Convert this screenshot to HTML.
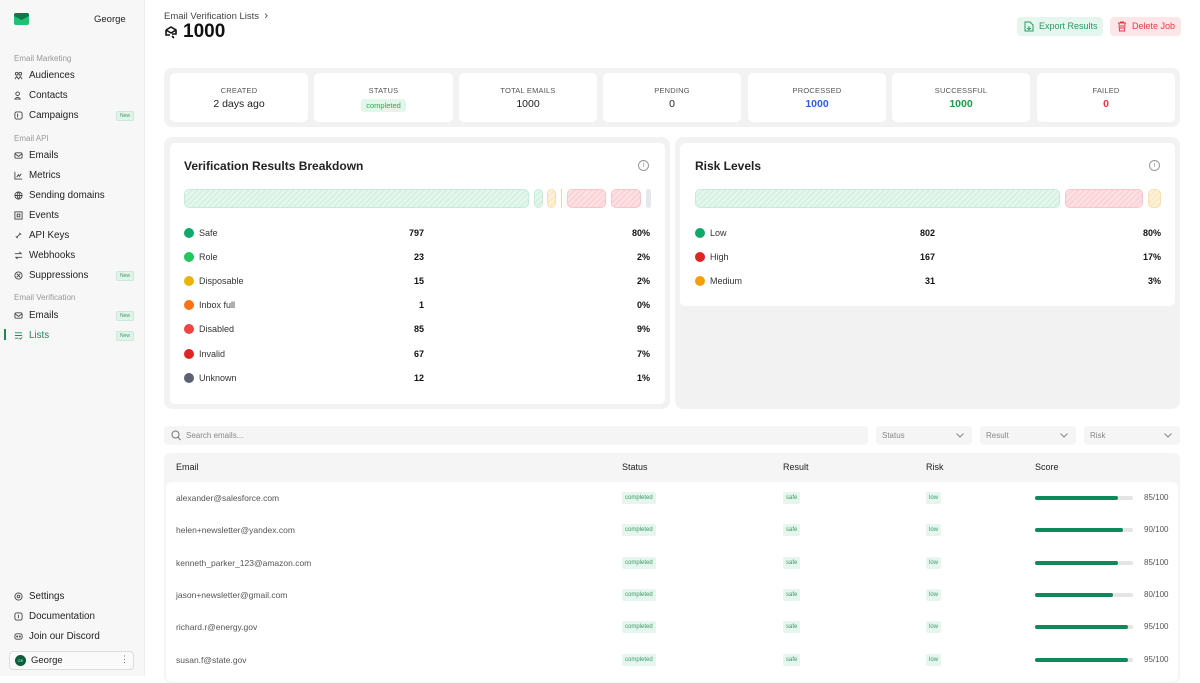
<!DOCTYPE html>
<html><head><meta charset="utf-8"><style>
*{box-sizing:border-box;margin:0;padding:0}
body{width:1200px;height:676px;overflow:hidden;font-family:"Liberation Sans",sans-serif;background:#fff;color:#111;position:relative}
.a{position:absolute}
#sb{left:0;top:0;width:145px;height:676px;background:#f7f7f7;border-right:1px solid #ececec}
.sec{position:absolute;left:14px;font-size:8px;color:#999}
.it{position:absolute;left:14px;font-size:9.8px;color:#222;display:flex;align-items:center;gap:6px;width:120px}
.it svg{width:9px;height:9px;flex:none}
.new{position:absolute;right:0;font-size:5px;color:#3a9a6a;background:#e2f4ea;border:1px solid #cbe9d8;border-radius:2px;padding:1px 3px}
.grey{background:#f2f2f2;border-radius:8px}
.card{position:absolute;background:#fff;border-radius:5px;text-align:center}
.lbl{font-size:7.5px;color:#555;margin-top:13px;letter-spacing:.2px}
.val{font-size:10.5px;margin-top:3px;color:#222}
.seg{position:absolute;height:19px;border-radius:5px}
.g{background:repeating-linear-gradient(135deg,#d6f1e4 0 2px,#e6f7ee 2px 4px);border:1px solid #c5ecd8}
.r{background:repeating-linear-gradient(135deg,#fbd3d6 0 2px,#fde3e5 2px 4px);border:1px solid #f7c5ca}
.y{background:repeating-linear-gradient(135deg,#fbe9c2 0 2px,#fdf3dc 2px 4px);border:1px solid #f7e0b0}
.lr{position:absolute;font-size:9px;color:#333;display:flex;align-items:center;gap:5px}
.dot{width:10px;height:10px;border-radius:50%}
.num{position:absolute;font-size:9px;font-weight:bold;text-align:right;width:60px}
.pct{position:absolute;font-size:9px;font-weight:bold;text-align:right;width:60px}
.tag{position:absolute;font-size:6px;color:#3a9a6a;background:#e6f6ee;border-radius:2px;padding:3px 3px;line-height:6px}
.row{position:absolute;left:176px;font-size:8.5px;color:#555}
.dd{position:absolute;top:426px;width:96px;height:19px;background:#f5f5f5;border-radius:4px;font-size:8px;color:#888;padding:5px 6px}
.dd svg{position:absolute;right:8px;top:7px}
</style></head><body>
<div id="sb" class="a">
<svg class="a" style="left:14px;top:13px" width="15" height="12" viewBox="0 0 15 12"><rect width="15" height="12" rx="2" fill="#1fbf74"/><path d="M0 2 Q0 0 2 0 H13 Q15 0 15 2 V3 L7.5 7 L0 3Z" fill="#0c7a48"/></svg>
<div class="a" style="left:94px;top:14px;font-size:9.5px;color:#222">George</div>
<div class="sec" style="top:54px">Email Marketing</div>
<div class="it" style="top:70px"><svg viewBox="0 0 10 10" fill="none" stroke="#444"><circle cx="3" cy="3" r="1.5"/><circle cx="7" cy="3" r="1.5"/><path d="M1 9 L3 6 L5 9 M5 9 L7 6 L9 9"/></svg>Audiences</div>
<div class="it" style="top:90px"><svg viewBox="0 0 10 10" fill="none" stroke="#444"><circle cx="4" cy="3" r="2"/><path d="M1 9 Q4 5 7 9Z"/></svg>Contacts</div>
<div class="it" style="top:110px"><svg viewBox="0 0 10 10" fill="none" stroke="#444"><rect x="1" y="1" width="8" height="8" rx="2"/><path d="M4 3V7"/></svg>Campaigns<span class="new">New</span></div>
<div class="sec" style="top:134px">Email API</div>
<div class="it" style="top:150px"><svg viewBox="0 0 10 10" fill="none" stroke="#444"><rect x="1" y="2" width="8" height="6" rx="1.5"/><path d="M1 3L5 6L9 3"/></svg>Emails</div>
<div class="it" style="top:170px"><svg viewBox="0 0 10 10" fill="none" stroke="#444"><path d="M1 1V9H9M3 7L5 4L6 6L8 3"/></svg>Metrics</div>
<div class="it" style="top:190px"><svg viewBox="0 0 10 10" fill="none" stroke="#444"><circle cx="5" cy="5" r="4"/><path d="M1 5H9M5 1Q2 5 5 9Q8 5 5 1"/></svg>Sending domains</div>
<div class="it" style="top:210px"><svg viewBox="0 0 10 10" fill="none" stroke="#444"><rect x="1" y="1" width="8" height="8"/><rect x="3.5" y="3.5" width="3" height="3"/></svg>Events</div>
<div class="it" style="top:230px"><svg viewBox="0 0 10 10" fill="none" stroke="#444"><path d="M2 6L4 8M6 2L8 4M3 7L7 3"/></svg>API Keys</div>
<div class="it" style="top:250px"><svg viewBox="0 0 10 10" fill="none" stroke="#444"><path d="M1 3H8L6 1M9 7H2L4 9"/></svg>Webhooks</div>
<div class="it" style="top:270px"><svg viewBox="0 0 10 10" fill="none" stroke="#444"><circle cx="5" cy="5" r="4"/><path d="M3 3L7 7M7 3L3 7"/></svg>Suppressions<span class="new">New</span></div>
<div class="sec" style="top:293px">Email Verification</div>
<div class="it" style="top:310px"><svg viewBox="0 0 10 10" fill="none" stroke="#444"><rect x="1" y="2" width="8" height="6" rx="1.5"/><path d="M1 3L5 6L9 3"/></svg>Emails<span class="new">New</span></div>
<div class="a" style="left:4px;top:329px;width:2px;height:11px;background:#1a8a55"></div>
<div class="it" style="top:330px;color:#1a8a55"><svg viewBox="0 0 10 10" fill="none" stroke="#1a8a55"><path d="M1 2H9M1 5H9M1 8H5M6 8L7 9L9 7"/></svg>Lists<span class="new">New</span></div>
<div class="it" style="top:591px"><svg viewBox="0 0 10 10" fill="none" stroke="#444"><circle cx="5" cy="5" r="4"/><circle cx="5" cy="5" r="1.5"/></svg>Settings</div>
<div class="it" style="top:611px"><svg viewBox="0 0 10 10" fill="none" stroke="#444"><rect x="1" y="1" width="8" height="8" rx="2"/><path d="M5 3V7"/></svg>Documentation</div>
<div class="it" style="top:631px"><svg viewBox="0 0 10 10" fill="none" stroke="#444"><rect x="1" y="2" width="8" height="6" rx="2"/><circle cx="3.5" cy="5" r=".6"/><circle cx="6.5" cy="5" r=".6"/></svg>Join our Discord</div>
<div class="a" style="left:9px;top:651px;width:125px;height:19px;background:#fafafa;border:1px solid #ddd;border-radius:4px"></div>
<div class="a" style="left:15px;top:655px;width:11px;height:11px;border-radius:50%;background:#0d5c3a;color:#9fe;font-size:4px;text-align:center;line-height:11px">GE</div>
<div class="a" style="left:31px;top:655px;font-size:9.5px;color:#222">George</div>
<div class="a" style="left:120px;top:654px;font-size:9px;color:#666">⋮</div>
</div>

<div class="a" style="left:164px;top:10px;font-size:9.5px;color:#444">Email Verification Lists &nbsp;<span style="font-size:11px">›</span></div>
<svg class="a" style="left:164px;top:25px" width="14" height="14" viewBox="0 0 14 14" fill="none" stroke="#111" stroke-width="1.6"><path d="M2 5L7 2L12 5V9H8M2 5V10H6M2 5L7 8L12 5M8 11L10 13"/></svg>
<div class="a" style="left:183px;top:21px;font-size:19px;font-weight:bold;color:#111">1000</div>
<div class="a" style="left:1017px;top:17px;width:86px;height:19px;background:#e5f6ee;border-radius:4px;font-size:9px;color:#2a9a66;line-height:19px;padding-left:22px">Export Results</div>
<svg class="a" style="left:1024px;top:21px" width="10" height="11" viewBox="0 0 10 11" fill="none" stroke="#2a9a66"><path d="M1 1H6L9 4V10H1Z M3 7L5 8.5L7 7M5 5V8.5"/></svg>
<div class="a" style="left:1110px;top:17px;width:71px;height:19px;background:#fde6e8;border-radius:4px;font-size:9px;color:#e53945;line-height:19px;padding-left:22px">Delete Job</div>
<svg class="a" style="left:1117px;top:21px" width="10" height="11" viewBox="0 0 10 11" fill="none" stroke="#e53945"><path d="M1 2H9M3.5 2V1H6.5V2M2 2L2.5 10H7.5L8 2M4 4V8M6 4V8"/></svg>

<div class="a grey" style="left:164px;top:68px;width:1016px;height:59px"></div>
<div class="card" style="left:170px;top:73px;width:138px;height:49px"><div class="lbl">CREATED</div><div class="val">2 days ago</div></div>
<div class="card" style="left:314px;top:73px;width:139px;height:49px"><div class="lbl">STATUS</div><div style="display:inline-block;margin-top:2px;font-size:7.5px;color:#1fae5a;background:#e2f7ea;border-radius:3px;padding:2px 5px">completed</div></div>
<div class="card" style="left:459px;top:73px;width:138px;height:49px"><div class="lbl">TOTAL EMAILS</div><div class="val">1000</div></div>
<div class="card" style="left:603px;top:73px;width:138px;height:49px"><div class="lbl">PENDING</div><div class="val">0</div></div>
<div class="card" style="left:748px;top:73px;width:138px;height:49px"><div class="lbl">PROCESSED</div><div class="val" style="color:#2f5be0;font-weight:bold">1000</div></div>
<div class="card" style="left:892px;top:73px;width:138px;height:49px"><div class="lbl">SUCCESSFUL</div><div class="val" style="color:#1e9a4a;font-weight:bold">1000</div></div>
<div class="card" style="left:1037px;top:73px;width:138px;height:49px"><div class="lbl">FAILED</div><div class="val" style="color:#e53945;font-weight:bold">0</div></div>

<div class="a grey" style="left:164px;top:137px;width:506px;height:272px"></div>
<div class="card" style="left:170px;top:143px;width:495px;height:261px;text-align:left"></div>
<div class="a" style="left:184px;top:159px;font-size:12px;font-weight:bold;color:#222">Verification Results Breakdown</div>
<div class="a" style="left:638px;top:160px;width:11px;height:11px;border:1px solid #999;border-radius:50%;font-size:7px;color:#999;text-align:center;line-height:9px">i</div>
<div class="seg g" style="left:184px;top:189px;width:345px"></div>
<div class="seg g" style="left:534px;top:189px;width:9px"></div>
<div class="seg y" style="left:547px;top:189px;width:9px"></div>
<div class="a" style="left:561px;top:189px;width:1px;height:19px;background:#f8c9b0"></div>
<div class="seg r" style="left:567px;top:189px;width:39px"></div>
<div class="seg r" style="left:611px;top:189px;width:30px"></div>
<div class="seg" style="left:646px;top:189px;width:5px;background:#e5e7eb"></div>

<div class="lr" style="left:184px;top:228px"><span class="dot" style="background:#10a86b"></span>Safe</div><div class="num" style="left:364px;top:228px">797</div><div class="pct" style="left:590px;top:228px">80%</div>
<div class="lr" style="left:184px;top:252px"><span class="dot" style="background:#22c55e"></span>Role</div><div class="num" style="left:364px;top:252px">23</div><div class="pct" style="left:590px;top:252px">2%</div>
<div class="lr" style="left:184px;top:276px"><span class="dot" style="background:#eab308"></span>Disposable</div><div class="num" style="left:364px;top:276px">15</div><div class="pct" style="left:590px;top:276px">2%</div>
<div class="lr" style="left:184px;top:300px"><span class="dot" style="background:#f97316"></span>Inbox full</div><div class="num" style="left:364px;top:300px">1</div><div class="pct" style="left:590px;top:300px">0%</div>
<div class="lr" style="left:184px;top:324px"><span class="dot" style="background:#ef4444"></span>Disabled</div><div class="num" style="left:364px;top:324px">85</div><div class="pct" style="left:590px;top:324px">9%</div>
<div class="lr" style="left:184px;top:349px"><span class="dot" style="background:#dc2626"></span>Invalid</div><div class="num" style="left:364px;top:349px">67</div><div class="pct" style="left:590px;top:349px">7%</div>
<div class="lr" style="left:184px;top:373px"><span class="dot" style="background:#5b6170"></span>Unknown</div><div class="num" style="left:364px;top:373px">12</div><div class="pct" style="left:590px;top:373px">1%</div>

<div class="a grey" style="left:675px;top:137px;width:505px;height:272px"></div>
<div class="card" style="left:680px;top:143px;width:495px;height:163px"></div>
<div class="a" style="left:695px;top:159px;font-size:12px;font-weight:bold;color:#222">Risk Levels</div>
<div class="a" style="left:1149px;top:160px;width:11px;height:11px;border:1px solid #999;border-radius:50%;font-size:7px;color:#999;text-align:center;line-height:9px">i</div>
<div class="seg g" style="left:695px;top:189px;width:365px"></div>
<div class="seg r" style="left:1065px;top:189px;width:78px"></div>
<div class="seg y" style="left:1148px;top:189px;width:13px"></div>
<div class="lr" style="left:695px;top:228px"><span class="dot" style="background:#10a86b"></span>Low</div><div class="num" style="left:875px;top:228px">802</div><div class="pct" style="left:1101px;top:228px">80%</div>
<div class="lr" style="left:695px;top:252px"><span class="dot" style="background:#dc2626"></span>High</div><div class="num" style="left:875px;top:252px">167</div><div class="pct" style="left:1101px;top:252px">17%</div>
<div class="lr" style="left:695px;top:276px"><span class="dot" style="background:#f59e0b"></span>Medium</div><div class="num" style="left:875px;top:276px">31</div><div class="pct" style="left:1101px;top:276px">3%</div>

<div class="a" style="left:164px;top:426px;width:704px;height:19px;background:#f5f5f5;border-radius:4px"></div>
<svg class="a" style="left:171px;top:430px" width="10" height="11" viewBox="0 0 10 11" fill="none" stroke="#777"><circle cx="4.5" cy="4.5" r="3.5"/><path d="M7 7L9.5 10"/></svg>
<div class="a" style="left:186px;top:431px;font-size:8px;color:#888">Search emails...</div>
<div class="dd" style="left:876px">Status<svg width="8" height="5" viewBox="0 0 8 5" fill="none" stroke="#888"><path d="M0.5 0.5L4 4L7.5 0.5"/></svg></div>
<div class="dd" style="left:980px">Result<svg width="8" height="5" viewBox="0 0 8 5" fill="none" stroke="#888"><path d="M0.5 0.5L4 4L7.5 0.5"/></svg></div>
<div class="dd" style="left:1084px">Risk<svg width="8" height="5" viewBox="0 0 8 5" fill="none" stroke="#888"><path d="M0.5 0.5L4 4L7.5 0.5"/></svg></div>

<div class="a" style="left:164px;top:453px;width:1016px;height:230px;background:#f5f5f5;border-radius:7px"></div>
<div class="a" style="left:166px;top:482px;width:1012px;height:200px;background:#fff;border-radius:6px"></div>
<div class="a" style="left:176px;top:462px;font-size:9px;color:#222">Email</div>
<div class="a" style="left:622px;top:462px;font-size:9px;color:#222">Status</div>
<div class="a" style="left:783px;top:462px;font-size:9px;color:#222">Result</div>
<div class="a" style="left:926px;top:462px;font-size:9px;color:#222">Risk</div>
<div class="a" style="left:1035px;top:462px;font-size:9px;color:#222">Score</div>

<div class="row" style="top:493px">alexander@salesforce.com</div>
<div class="row" style="top:525px">helen+newsletter@yandex.com</div>
<div class="row" style="top:558px">kenneth_parker_123@amazon.com</div>
<div class="row" style="top:590px">jason+newsletter@gmail.com</div>
<div class="row" style="top:622px">richard.r@energy.gov</div>
<div class="row" style="top:655px">susan.f@state.gov</div>

<div id="rows"></div>
<script>
var ys=[498,530,563,595,627,660],sc=[85,90,85,80,95,95],h='';
for(var i=0;i<6;i++){var y=ys[i];
h+='<div class="tag" style="left:622px;top:'+(y-6)+'px">completed</div>';
h+='<div class="tag" style="left:783px;top:'+(y-6)+'px">safe</div>';
h+='<div class="tag" style="left:926px;top:'+(y-6)+'px">low</div>';
h+='<div class="a" style="left:1035px;top:'+(y-2)+'px;width:98px;height:4px;background:#e5e5e5;border-radius:2px"><div style="width:'+sc[i]+'%;height:4px;background:#0b8a5a;border-radius:2px"></div></div>';
h+='<div class="a" style="left:1144px;top:'+(y-5)+'px;font-size:8px;color:#555">'+sc[i]+'/100</div>';}
document.getElementById('rows').innerHTML=h;
</script>
</body></html>
